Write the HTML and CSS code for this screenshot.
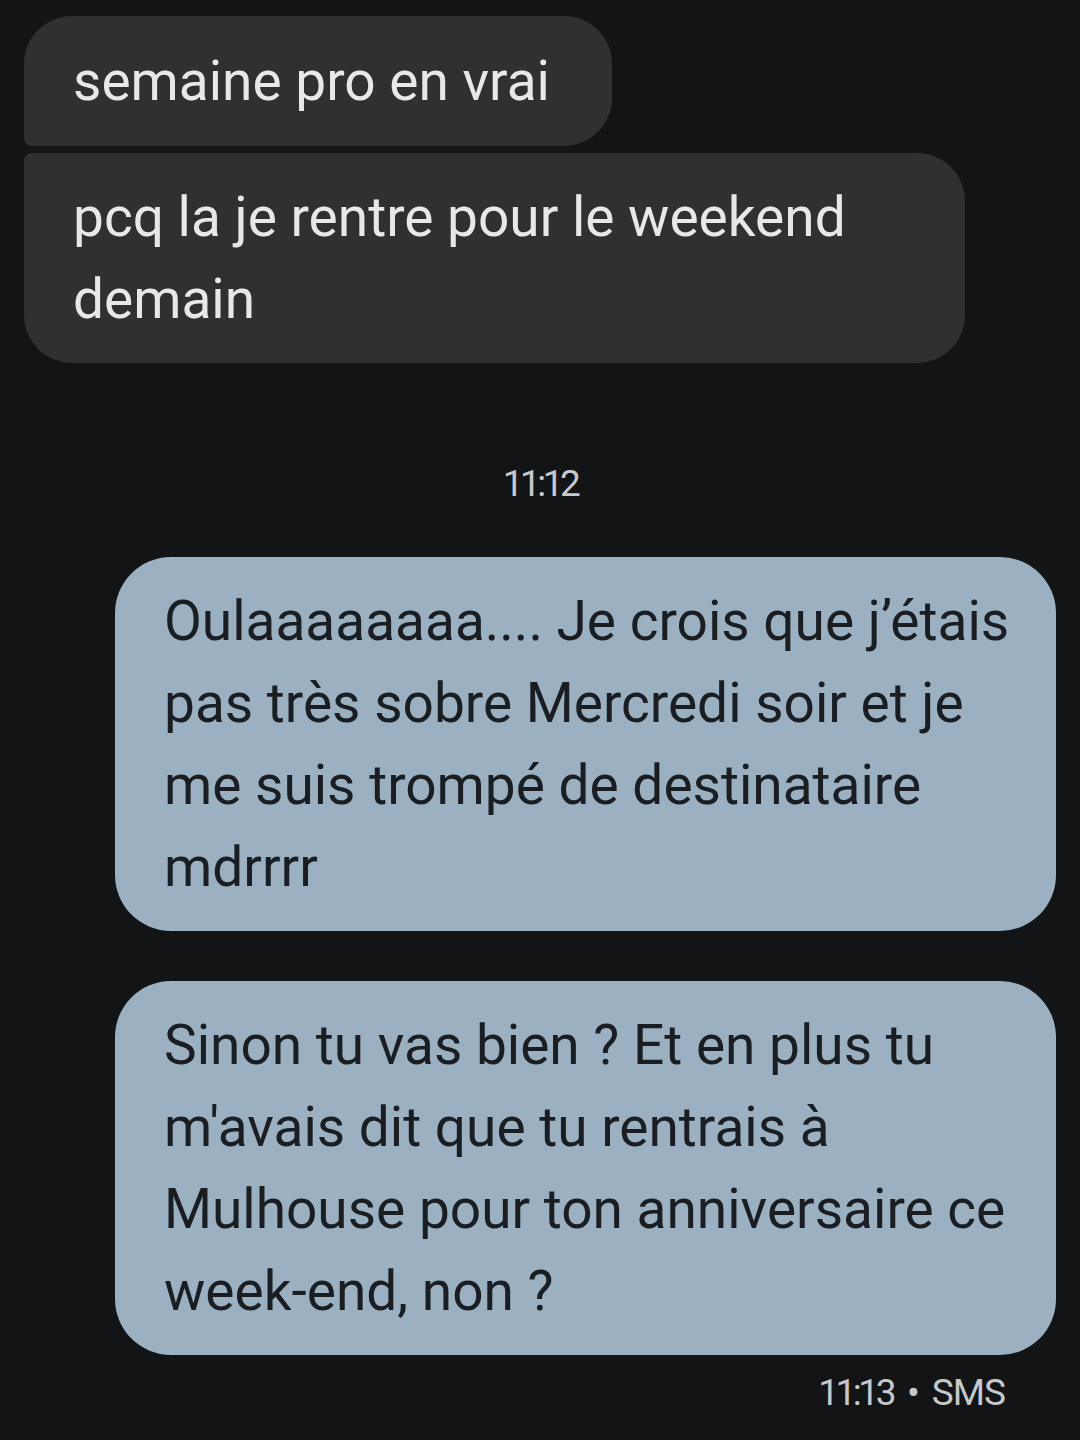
FILE: index.html
```html
<!DOCTYPE html>
<html lang="fr">
<head>
<meta charset="utf-8">
<title>Messages</title>
<link rel="stylesheet" href="styles.css">
</head>
<body>
<main class="thread">
  <section class="group group-in">
    <div class="bubble in first">semaine pro en vrai</div>
    <div class="bubble in last">pcq la je rentre pour le weekend demain</div>
  </section>
  <div class="stamp">11:12</div>
  <section class="group group-out">
    <div class="bubble out">Oulaaaaaaaa.... Je crois que j’étais pas très sobre Mercredi soir et je me suis trompé de destinataire mdrrrr</div>
    <div class="bubble out">Sinon tu vas bien ? Et en plus tu m'avais dit que tu rentrais à Mulhouse pour ton anniversaire ce week-end, non ?</div>
  </section>
  <div class="meta"><span class="time">11:13</span><span class="dot">•</span><span class="kind">SMS</span></div>
</main>
</body>
</html>
```
FILE: styles.css
```css
html, body {
  margin: 0;
  padding: 0;
}
body {
  background: #131416;
  font-family: Roboto, "Noto Sans", "Liberation Sans", sans-serif;
  width: 1080px;
  height: 1440px;
  overflow: hidden;
}
.thread {
  display: flex;
  flex-direction: column;
  padding-top: 16px;
}
.group {
  display: flex;
  flex-direction: column;
}
.group-in {
  align-items: flex-start;
  gap: 7px;
  padding: 0 24px;
}
.group-out {
  align-items: flex-end;
  gap: 50px;
  padding: 0 24px;
  margin-top: 49px;
}
.bubble {
  max-width: 941px;
  box-sizing: border-box;
  font-size: 55px;
  line-height: 82px;
  padding: 23px 46px 23px 49px;
}
.in {
  background: #303033;
  color: #e8e8ea;
  border-radius: 48px;
}
.in.first {
  border-bottom-left-radius: 8px;
  padding-top: 24px;
  padding-bottom: 24px;
  padding-right: 62px;
}
.in.last {
  border-top-left-radius: 8px;
}
.out {
  background: #9bb0c0;
  color: #1a1e22;
  border-radius: 56px;
}
.stamp {
  margin-top: 97px;
  text-align: center;
  color: #c6c8cc;
  font-size: 37px;
  line-height: 48px;
  letter-spacing: -3.5px;
}
.meta {
  margin-top: 14px;
  display: flex;
  justify-content: flex-end;
  align-items: center;
  padding-right: 75px;
  color: #c6c8cc;
  font-size: 37px;
  line-height: 48px;
}
.time {
  letter-spacing: -3.5px;
}
.dot {
  margin: 0 12px 0 14px;
  font-size: 38px;
}
.kind {
  letter-spacing: -1px;
}
```
